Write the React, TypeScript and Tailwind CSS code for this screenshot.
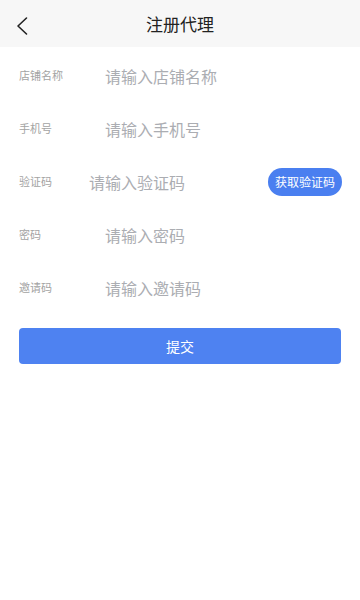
import { useState } from "react";

const font = { fontFamily: '"Noto Sans CJK SC", "Noto Sans", sans-serif' };

type Field = {
  label: string;
  placeholder: string;
  code?: boolean;
};

const fields: Field[] = [
  { label: "店铺名称", placeholder: "请输入店铺名称" },
  { label: "手机号", placeholder: "请输入手机号" },
  { label: "验证码", placeholder: "请输入验证码", code: true },
  { label: "密码", placeholder: "请输入密码" },
  { label: "邀请码", placeholder: "请输入邀请码" },
];

const App = () => {
  const [values, setValues] = useState<Record<string, string>>({});

  return (
    <div className="min-h-screen bg-white" style={font}>
      {/* Header */}
      <div className="relative h-[47px] bg-[#f7f7f7] flex items-center justify-center">
        <button className="absolute left-[14px] top-[15px] w-[16px] h-[22px] flex items-center justify-center">
          <svg width="14" height="20" viewBox="0 0 14 20" fill="none">
            <path d="M11.5 2 L3 10 L11.5 18" stroke="#222" strokeWidth="1.6" strokeLinecap="round" strokeLinejoin="round" />
          </svg>
        </button>
        <h1 className="text-[17px] text-[#222] leading-none">注册代理</h1>
      </div>

      {/* Form */}
      <div className="px-[19px] pt-[2px]">
        {fields.map(f => (
          <div key={f.label} className="h-[53px] flex items-center">
            <span className={`text-[11px] text-[#a3a3a3] shrink-0 ${f.code ? "w-[70px]" : "w-[86px]"}`}>
              {f.label}
            </span>
            <input
              className="flex-1 min-w-0 text-[16px] text-[#333] placeholder:text-[#abadb2] outline-none bg-transparent"
              style={font}
              placeholder={f.placeholder}
              value={values[f.label] ?? ""}
              onChange={e => setValues(prev => ({ ...prev, [f.label]: e.target.value }))}
            />
            {f.code && (
              <button className="shrink-0 -mr-[1px] h-[28px] w-[74px] rounded-full bg-[#4a7ff0] text-white text-[12px] leading-none">
                获取验证码
              </button>
            )}
          </div>
        ))}

        <button className="mt-[14px] w-full h-[36px] rounded-[4px] bg-[#4e82f1] text-white text-[14px]">
          提交
        </button>
      </div>
    </div>
  );
};

export default App;
